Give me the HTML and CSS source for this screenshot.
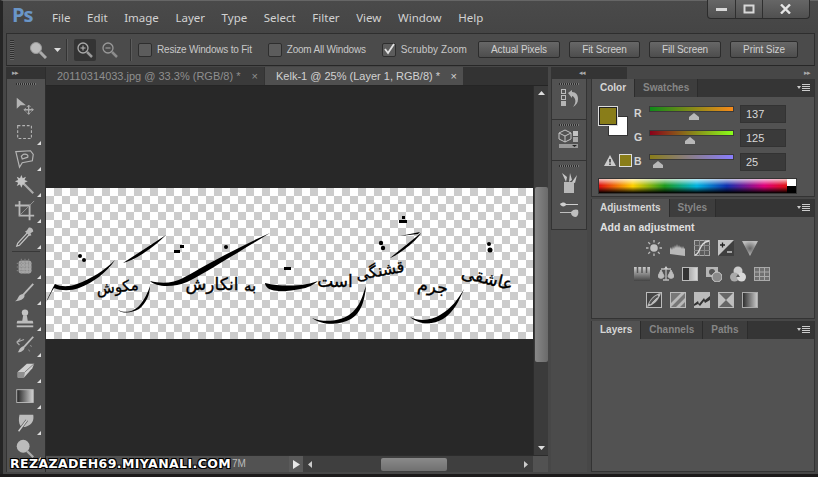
FILE: index.html
```html
<!DOCTYPE html>
<html lang="en">
<head>
<meta charset="utf-8">
<title>Photoshop</title>
<link rel="stylesheet" href="styles.css">
</head>
<body>
<div class="window">
  <header class="titlebar">
    <div class="logo">Ps</div>
    <nav class="menu"><span>File</span><span>Edit</span><span>Image</span><span>Layer</span><span>Type</span><span>Select</span><span>Filter</span><span>View</span><span>Window</span><span>Help</span></nav>
    <div class="winctl">
      <div class="wbtn w-min"><svg width="12" height="6"><rect y="2" width="11" height="3" fill="#d8d8d8"/></svg></div>
      <div class="wbtn w-max"><svg width="12" height="10"><rect x="1.5" y="1.5" width="9" height="7" fill="none" stroke="#d8d8d8" stroke-width="2"/></svg></div>
      <div class="wbtn w-close"><svg width="12" height="10"><path d="M1 0.5L10 9.5M10 0.5L1 9.5" stroke="#e4e4e4" stroke-width="2.4"/></svg></div>
    </div>
  </header>

  <section class="options">
    <div class="grip"></div>
    <svg class="opt-tool" width="18" height="18" viewBox="0 0 18 18"><circle cx="7" cy="7" r="5.5" fill="#bbb" stroke="#999"/><path d="M11 11l6 6" stroke="#aaa" stroke-width="3"/></svg>
    <svg class="opt-drop" width="7" height="4"><path d="M0 0h7l-3.500 4z" fill="#ddd"/></svg>
    <div class="sep sep-a"></div>
    <div class="zoombtn active"><svg width="18" height="18" viewBox="0 0 18 18"><circle cx="7" cy="7" r="5" fill="none" stroke="#aaa" stroke-width="1.300"/><path d="M4.500 7h5M7 4.500v5" stroke="#bbb"/><path d="M11 11l5 5" stroke="#999" stroke-width="2.500"/></svg></div>
    <div class="zoombtn"><svg width="18" height="18" viewBox="0 0 18 18"><circle cx="7" cy="7" r="5" fill="none" stroke="#999" stroke-width="1.300"/><path d="M4.500 7h5" stroke="#aaa"/><path d="M11 11l5 5" stroke="#8c8c8c" stroke-width="2.500"/></svg></div>
    <div class="sep sep-b"></div>
    <label class="check c1"><i class="box"></i>Resize Windows to Fit</label>
    <label class="check c2"><i class="box"></i>Zoom All Windows</label>
    <label class="check c3"><i class="box"><svg width="14" height="14"><path d="M3 6l3 4 6-9" fill="none" stroke="#e2e2e2" stroke-width="1.800"/></svg></i>Scrubby Zoom</label>
    <button class="btn b1">Actual Pixels</button>
    <button class="btn b2">Fit Screen</button>
    <button class="btn b3">Fill Screen</button>
    <button class="btn b4">Print Size</button>
  </section>

  <main class="workspace">
    <aside class="tools">
      <div class="collapse"><span>▸▸</span></div>
      <div class="dots"></div>
      <div class="tool t-first"><svg viewBox="0 0 24 24"><path d="M3 2l10 8H7l-4 4z" fill="#b4b4b4"/><path d="M16 10v10M11 15h10" stroke="#aaa" stroke-width="1.500"/><path d="M14 12l2-2 2 2M14 18l2 2 2-2M13 13l-2 2 2 2M19 13l2 2-2 2" fill="none" stroke="#aaa"/></svg></div>
      <div class="tool corner"><svg viewBox="0 0 24 24"><rect x="4" y="4" width="15" height="14" fill="none" stroke="#b4b4b4" stroke-width="1.200" stroke-dasharray="3 2"/></svg></div>
      <div class="tool corner"><svg viewBox="0 0 24 24"><path d="M2 4l16-1 3 4-1 7-11 2-3 5zM10 7c4-1 6 1 5 3l-6 2-1-3z" fill="none" stroke="#b4b4b4" stroke-width="1.300"/></svg></div>
      <div class="tool corner"><svg viewBox="0 0 24 24"><path d="M8 1l1.500 3.500L13 3l-1.500 3.500L15 8l-3.500 1.500L13 13l-3.500-1.500L8 15l-1.500-3.500L3 13l1.500-3.500L1 8l3.500-1.500L3 3l3.500 1.500z" fill="#c4c4c4"/><path d="M11 11l10 10" stroke="#aaa" stroke-width="2.400"/></svg></div>
      <div class="tool corner"><svg viewBox="0 0 24 24"><path d="M6 1v16h16M1 6h16v16" fill="none" stroke="#b8b8b8" stroke-width="2"/><path d="M6 17L22 1" stroke="#999"/></svg></div>
      <div class="tool corner"><svg viewBox="0 0 24 24"><path d="M15 7l-11 12-1 3 3-1 11-12z" fill="none" stroke="#c4c4c4" stroke-width="1.300"/><path d="M14 5l2-3c2-1 5 1 5 4l-3 2 1 2-2 1-5-5z" fill="#b8b8b8"/></svg></div>
      <div class="toolsep"></div>
      <div class="tool corner"><svg viewBox="0 0 24 24"><rect x="5" y="5" width="14" height="14" rx="3" fill="#a6a6a6"/><path d="M3 8h18M3 12h18M3 16h18M8 3v18M12 3v18M16 3v18" stroke="#8a8a8a" stroke-dasharray="1.500 1.500"/></svg></div>
      <div class="tool corner"><svg viewBox="0 0 24 24"><path d="M21 2L10 14" stroke="#bbb" stroke-width="2"/><path d="M10 13c2 1 2 3 0 5-2 2-6 3-9 3 2-1 3-3 4-5 1-2 3-3 5-3z" fill="#bdbdbd"/></svg></div>
      <div class="tool corner"><svg viewBox="0 0 24 24"><circle cx="12" cy="5" r="3.500" fill="#c4c4c4"/><path d="M10 8h4l1 6h5c1 0 1 3 1 3H3s0-3 1-3h5z" fill="#bcbcbc"/><rect x="3" y="19" width="18" height="2" fill="#bdbdbd"/></svg></div>
      <div class="tool corner"><svg viewBox="0 0 24 24"><path d="M21 3L11 14" stroke="#bbb" stroke-width="2"/><path d="M11 13c2 2-1 7-7 7 2-2 2-6 7-7z" fill="#bdbdbd"/><path d="M3 9l8-3M3 9l4-4M3 9l3 3" stroke="#aaa" stroke-width="1.300" fill="none"/><path d="M18 12l1 2M16 17l1 2" stroke="#999"/></svg></div>
      <div class="tool corner"><svg viewBox="0 0 24 24"><path d="M4 13L14 4h8l-2 5-9 10H4z" fill="#cfcfcf"/><path d="M4 13h8l-1 6H4z" fill="#8f8f8f"/><path d="M12 13L22 4" stroke="#777"/></svg></div>
      <div class="tool corner"><svg viewBox="0 0 24 24"><defs><linearGradient id="gr"><stop offset="0" stop-color="#222"/><stop offset="1" stop-color="#d5d5d5"/></linearGradient></defs><rect x="3" y="4" width="18" height="14" fill="url(#gr)" stroke="#bbb"/></svg></div>
      <div class="tool corner"><svg viewBox="0 0 24 24"><path d="M6 3h15c1 6-1 11-8 13-3 1-5 0-6-1-2-3-2-8-1-12z" fill="#bdbdbd"/><path d="M14 9L5 21" stroke="#555" stroke-width="3"/><path d="M14 9L5 21" stroke="#d0d0d0" stroke-width="1.400"/></svg></div>
      <div class="tool corner"><svg viewBox="0 0 24 24"><circle cx="10" cy="9" r="7" fill="#bbb"/><path d="M14 14l7 7" stroke="#aaa" stroke-width="2.500"/></svg></div>
    </aside>

    <section class="document">
      <div class="tabs">
        <div class="tab tab-off">20110314033.jpg @ 33.3% (RGB/8) *<b>×</b></div>
        <div class="tab tab-on">Kelk-1 @ 25% (Layer 1, RGB/8) *<b>×</b></div>
      </div>
      <div class="docbody">
        <div class="viewport">
          <svg class="canvas" width="487" height="151" viewBox="46 188 487 151">
            <g class="script" font-family="'DejaVu Sans',sans-serif" fill="#000" direction="rtl" text-anchor="middle">
              <text font-size="17" transform="translate(486 284) rotate(14)">عاشقی</text>
              <text font-size="17" transform="translate(432 292) rotate(8)">جرم</text>
              <text font-size="16" transform="translate(381 276) rotate(-10)">قشنگی</text>
              <text font-size="17" transform="translate(335 287)">است</text>
              <text font-size="15" transform="translate(250 291)">به</text>
              <text font-size="17" transform="translate(212 290)">انکارش</text>
              <text font-size="15" transform="translate(118 292) rotate(-6)">مکوش</text>
            </g>
            <g fill="#000">
              <path d="M410 317c10 5 22 3 30-2 12-7 18-16 24-26-5 12-10 23-21 30-10 6-24 6-33-2z"/>
              <path d="M312 318c12 5 28 3 37-3 12-8 14-22 17-29-1 10-3 26-15 33-12 7-30 6-39-1z"/>
              <path d="M265 283c12 3 24 3 36 2 6-1 12-2 17-4-5 4-10 7-18 8-8 2-22 3-28 1-4-1-7-4-7-7z"/>
              <path d="M390 258l31-25c-2 5-20 21-31 25zM400 236l20-4-2 2z"/>
              <path d="M118 310c8 4 16 1 21-4 6-7 9-14 11-20 0 9-4 17-11 23-7 4-16 5-21 1z"/>
              <path d="M150 281c12 3 24 2 33-3 12-6 40-24 87-45-40 24-68 42-83 49-12 5-30 6-37-1z"/>
              <path d="M123 263l43-28c-10 10-28 24-43 28z"/>
              <path d="M46 302c3-6 6-13 9-18 6 3 14 3 22 0 14-5 28-14 38-24-8 12-22 23-36 28-8 3-18 3-25 0-3 4-5 10-8 14z"/>
              <circle cx="80" cy="256" r="2"/><circle cx="84" cy="260" r="2"/><rect x="174" y="250" width="6" height="3"/><rect x="180" y="245" width="4" height="3"/>
              <rect x="284" y="267" width="7" height="3"/><rect x="399" y="220" width="8" height="3"/><rect x="402" y="216" width="3" height="3"/><circle cx="381" cy="243" r="2.200"/><circle cx="383" cy="248" r="2.200"/><circle cx="490" cy="250" r="2.500"/><circle cx="489" cy="244" r="2"/>
              <circle cx="226" cy="247" r="2"/>
            </g>
          </svg>
        </div>
        <div class="vscroll">
          <svg class="sb-up" width="7" height="4"><path d="M0 4h7L3.500 0z" fill="#ddd"/></svg>
          <div class="vthumb"></div>
          <svg class="sb-down" width="7" height="4"><path d="M0 0h7L3.500 4z" fill="#ddd"/></svg>
        </div>
      </div>
      <div class="statusrow">
        <div class="status">7M</div>
        <div class="st-arrow"><svg width="7" height="9"><path d="M0 0v9l7-4.500z" fill="#e8e8e8"/></svg></div>
        <div class="hscroll">
          <svg width="4" height="7"><path d="M4 0v7L0 3.500z" fill="#ccc"/></svg>
          <div class="hthumb"></div>
          <svg class="h-right" width="4" height="7"><path d="M0 0v7l4-3.500z" fill="#ccc"/></svg>
        </div>
        <div class="corner-box"></div>
      </div>
    </section>

    <aside class="dock">
      <div class="collapse dock-head"><span>◂◂</span></div>
      <div class="dockgroup g1"><div class="dots"></div><svg viewBox="0 0 20 20" width="20" height="20"><g fill="none" stroke="#bbb"><rect x="2.500" y="1.500" width="4" height="4"/><rect x="2.500" y="7.500" width="4" height="4"/></g><rect x="2" y="13" width="5" height="5" fill="#b5b5b5"/><path d="M9 5l4-3v2c4 0 6 3 6 7s-2 6-5 8c2-3 3-5 2-8-1-2-2-3-3-3v2z" fill="#b5b5b5"/></svg></div>
      <div class="dockgroup g2"><div class="dots"></div><svg viewBox="0 0 22 22" width="22" height="22"><path d="M7 1l6 3v6l-6 3-6-3V4zM1 4l6 3 6-3M7 7v6" fill="none" stroke="#c4c4c4"/><rect x="15" y="2" width="5" height="5" fill="#c4c4c4"/><rect x="15" y="8" width="5" height="5" fill="#aaa"/><rect x="1" y="15" width="19" height="4" fill="#999"/><path d="M14 16h5l-2.500 2z" fill="#222"/></svg></div>
      <div class="dockgroup g3"><div class="dots"></div>
        <svg viewBox="0 0 20 22" width="20" height="22"><path d="M5 10h10v11H5z" fill="#b8b8b8"/><path d="M7 10L3 1l5 4zM10 10l1-9 2 7zM13 10l5-7-2 8z" fill="#c8c8c8"/></svg>
        <svg class="g3b" viewBox="0 0 20 18" width="20" height="18"><path d="M1 3c2-2 5-2 6 0h12v1H7c-1 2-5 2-6-1z" fill="#cfcfcf"/><path d="M1 11h11c2-3 6-3 7-2 1 3 0 6-2 7-3 0-5-2-5-4H1z" fill="#bfbfbf"/></svg>
      </div>
    </aside>

    <aside class="panels">
      <div class="collapse panels-head"><span>▸▸</span></div>

      <section class="panel color">
        <div class="ptabs"><span class="on">Color</span><span>Swatches</span><i class="pmenu"></i></div>
        <div class="color-main">
          <div class="swatches"><div class="bgc"></div><div class="fgc"></div></div>
          <div class="warn">
            <svg width="12" height="11"><path d="M6 0l6 11H0z" fill="#ccc"/><path d="M6 4v3.500M6 8.500v1.500" stroke="#333" stroke-width="1.500"/></svg>
            <i class="gamut"></i>
          </div>
          <div class="sliders">
            <div class="srow"><span>R</span><div class="track"><div class="bar r"></div><i class="thumb" style="left:40px"></i></div><div class="val">137</div></div>
            <div class="srow"><span>G</span><div class="track"><div class="bar g"></div><i class="thumb" style="left:36px"></i></div><div class="val">125</div></div>
            <div class="srow"><span>B</span><div class="track"><div class="bar b"></div><i class="thumb" style="left:4px"></i></div><div class="val">25</div></div>
          </div>
        </div>
        <div class="spectrum"><div class="rainbow"></div><div class="bw"></div></div>
      </section>

      <section class="panel adjust">
        <div class="ptabs"><span class="on">Adjustments</span><span>Styles</span><i class="pmenu"></i></div>
        <h3>Add an adjustment</h3>
        <div class="arow">
          <svg viewBox="0 0 16 16"><circle cx="8" cy="8" r="3.800" fill="#c0c0c0"/><path d="M8 0v2.500M8 13.500V16M0 8h2.500M13.500 8H16M2.300 2.300l1.800 1.800M11.900 11.900l1.800 1.800M2.300 13.700l1.800-1.800M11.900 4.100l1.800-1.800" stroke="#bbb" stroke-width="1.300"/></svg>
          <svg viewBox="0 0 16 16"><path d="M0 14V9l1-2 1 3 1-4 1 3 1-4 1 3 1-4 1 4 1-3 1 3 1-2 1 3 1-3 1 3 1-1v8z" fill="#b8b8b8"/></svg>
          <svg viewBox="0 0 16 16"><rect x=".5" y=".5" width="15" height="15" fill="#5c5c5c" stroke="#aaa"/><path d="M5.500 0v16M10.500 0v16M0 5.500h16M0 10.500h16" stroke="#8a8a8a"/><path d="M1 15c5 0 4-13 14-14" fill="none" stroke="#ddd" stroke-width="1.300"/></svg>
          <svg viewBox="0 0 16 16"><rect width="16" height="16" fill="#c4c4c4"/><path d="M0 16L16 0v16z" fill="#3f3f3f"/><path d="M2 5h5M4.500 2.500v5" stroke="#222" stroke-width="1.300"/><path d="M9 12h5" stroke="#ddd" stroke-width="1.300"/></svg>
          <svg viewBox="0 0 16 16"><defs><radialGradient id="tri"><stop offset="0" stop-color="#666"/><stop offset="1" stop-color="#bbb"/></radialGradient></defs><path d="M0 1h16L8 16z" fill="url(#tri)"/></svg>
        </div>
        <div class="arow">
          <svg viewBox="0 0 16 16"><defs><linearGradient id="hs" x2="0" y2="1"><stop offset="0" stop-color="#ccc"/><stop offset="1" stop-color="#444"/></linearGradient></defs><rect y="1" width="16" height="14" fill="url(#hs)"/><path d="M3.500 1v6M8 1v6M12.500 1v6" stroke="#555" stroke-width="1.500"/></svg>
          <svg viewBox="0 0 16 16"><path d="M8 1v13M3 3h10M5 14h6" stroke="#bbb" stroke-width="1.300"/><path d="M8 0l2 3H6z" fill="#ccc"/><path d="M0 10l3-6 3 6c0 3-6 3-6 0zM10 10l3-6 3 6c0 3-6 3-6 0z" fill="#bbb" stroke="#bbb"/></svg>
          <svg viewBox="0 0 16 16"><defs><linearGradient id="bw"><stop offset="0" stop-color="#888"/><stop offset="1" stop-color="#ddd"/></linearGradient></defs><rect x=".5" y="1.500" width="15" height="13" fill="url(#bw)" stroke="#bbb"/><rect x="1" y="2" width="6" height="12" fill="#333"/></svg>
          <svg viewBox="0 0 16 16"><rect y="1" width="12" height="10" fill="#b5b5b5"/><circle cx="6" cy="6" r="3" fill="#555"/><circle cx="11" cy="11" r="5" fill="#8a8a8a" stroke="#ccc"/></svg>
          <svg viewBox="0 0 16 16"><circle cx="8" cy="5" r="4.500" fill="#ccc"/><circle cx="4.500" cy="11" r="4.500" fill="#aaa"/><circle cx="11.500" cy="11" r="4.500" fill="#d8d8d8"/><path d="M8 8l-2 3h4z" fill="#555"/></svg>
          <svg viewBox="0 0 16 16"><rect x=".5" y="1.500" width="15" height="13" fill="#707070" stroke="#aaa"/><path d="M5.500 1v14M10.500 1v14M0 6h16M0 10.500h16" stroke="#aaa"/></svg>
        </div>
        <div class="arow">
          <svg viewBox="0 0 16 16"><rect x=".5" y=".5" width="15" height="15" fill="#444" stroke="#bbb"/><path d="M1 15C3 8 8 2 15 1c-2 7-7 12-14 14z" fill="#bbb"/><path d="M4 12c1-3 5-7 8-8" stroke="#555" stroke-width="2"/></svg>
          <svg viewBox="0 0 16 16"><rect x=".5" y=".5" width="15" height="15" fill="#777" stroke="#bbb"/><path d="M1 11L11 1h4L1 15zM6 15L15 6v4l-5 5z" fill="#b8b8b8"/></svg>
          <svg viewBox="0 0 16 16"><rect x=".5" y=".5" width="15" height="15" fill="#bbb" stroke="#bbb"/><path d="M0 12l4-3 1 3 5-6 1 2 5-4v4l-5 3-1-2-4 5-2-2-4 2z" fill="#333"/></svg>
          <svg viewBox="0 0 16 16"><rect x=".5" y=".5" width="15" height="15" fill="#666" stroke="#bbb"/><path d="M1 1l7 7-7 7zM15 1L8 8l7 7z" fill="#bfbfbf"/></svg>
          <svg viewBox="0 0 16 16"><rect x=".5" y=".5" width="15" height="15" fill="url(#bw2)" stroke="#aaa"/><defs><linearGradient id="bw2"><stop offset="0" stop-color="#2a2a2a"/><stop offset="1" stop-color="#ccc"/></linearGradient></defs></svg>
        </div>
      </section>

      <section class="panel layers">
        <div class="ptabs"><span class="on">Layers</span><span>Channels</span><span>Paths</span><i class="pmenu"></i></div>
      </section>
    </aside>
  </main>
  <div class="watermark">REZAZADEH69.MIYANALI.COM</div>
</div>
</body>
</html>
```
FILE: styles.css
```css
* { box-sizing: border-box; }
html, body { margin: 0; padding: 0; }
body { width: 818px; height: 477px; overflow: hidden; font-family: "Liberation Sans", Arial, sans-serif; background: #1c1a1a; }
.window { position: relative; width: 818px; height: 474px; background: #474747; border-left: 3px solid #252525; border-top: 1px solid #666; display: flex; flex-direction: column; color: #ccc; }

.titlebar { display: flex; height: 32px; flex: none; align-items: flex-start; background: linear-gradient(#4a4a4a, #454545); }
.logo { width: 49px; padding: 2px 0 0 9px; font: 700 20px/24px "Open Sans", sans-serif; color: #6a96c8; letter-spacing: -1px; }
.menu { display: flex; gap: 16.600px; padding-top: 9px; font: 11.500px/15px "Noto Sans", sans-serif; color: #d2d2d2; }
.winctl { margin-left: auto; margin-right: 8px; display: flex; height: 19px; margin-top: -1px; background: linear-gradient(#666, #505050); border: 1px solid #2c2c2c; border-top: 0; border-radius: 0 0 4px 4px; }
.wbtn { display: flex; align-items: center; justify-content: center; height: 100%; border-right: 1px solid #2f2f2f; }
.w-min { width: 28px; }
.w-max { width: 27px; }
.w-close { width: 46px; border-right: 0; }

.options { position: relative; flex: none; height: 33px; margin: 0 3px 1px 3px; display: flex; align-items: center; background: #4b4b4b; border: 1px solid #2e2e2e; border-bottom: 1px solid #272727; font-size: 10px; letter-spacing: -.2px; }
.grip { width: 4px; height: 20px; margin-left: 3px; background: repeating-linear-gradient(#2e2e2e 0 1px, #666 1px 2px); }
.opt-tool { margin-left: 15px; }
.opt-drop { margin-left: 7px; }
.sep { width: 1px; height: 22px; background: #333; box-shadow: 1px 0 #5c5c5c; }
.sep-a { margin: 0 7px 0 5px; }
.sep-b { margin: 0 7px 0 6px; }
.zoombtn { width: 22px; height: 22px; display: flex; align-items: center; justify-content: center; margin-right: 3px; }
.zoombtn.active { background: #343434; border-radius: 2px; }
.check { display: flex; align-items: center; gap: 5px; color: #c8c8c8; white-space: nowrap; }
.box { width: 14px; height: 14px; background: #5c5c5c; border: 1px solid #2e2e2e; border-radius: 2px; display: block; flex: none; }
.box svg { display: block; margin: -1px; }
.c2 { margin-left: 16px; }
.c3 { margin-left: 16px; letter-spacing: .1px; }
.btn { height: 17px; padding: 0; margin: 0; background: linear-gradient(#676767, #4d4d4d); border: 1px solid #2c2c2c; border-radius: 2px; color: #d0d0d0; font: 10px/14px "Liberation Sans", sans-serif; letter-spacing: -.1px; }
.b1 { width: 82px; margin-left: 11px; }
.b2 { width: 71px; margin-left: 9px; }
.b3 { width: 72px; margin-left: 9px; }
.b4 { width: 68px; margin-left: 9px; }

.workspace { flex: 1; min-height: 0; display: flex; padding-bottom: 2px; }
.collapse { height: 12px; background: #333; color: #aaa; font-size: 7px; line-height: 11px; padding-left: 5px; letter-spacing: -1px; flex: none; }
.dots { height: 2px; margin: 4px auto 0; width: 20px; background: repeating-linear-gradient(90deg, #2c2c2c 0 1px, #777 1px 2px); }

.tools { width: 40px; margin-left: 3px; flex: none; background: #525252; border-right: 1px solid #2d2d2d; border-left: 1px solid #333; display: flex; flex-direction: column; align-items: stretch; overflow: hidden; }
.tool { position: relative; height: 26px; flex: none; display: flex; align-items: center; padding-left: 7px; }
.tool svg { width: 22px; height: 22px; }
.t-first { margin-top: 9px; }
.corner::after { content: ""; position: absolute; right: 4px; bottom: 1px; border: 2px solid transparent; border-right-color: #ddd; border-bottom-color: #ddd; }
.toolsep { height: 1px; background: #383838; margin: 1px 5px 2px; flex: none; }

.document { width: 502px; flex: none; display: flex; flex-direction: column; margin-right: 3px; }
.tabs { height: 19px; flex: none; display: flex; background: #333; font-size: 11px; line-height: 19px; border-bottom: 1px solid #252525; }
.tab { padding-left: 11px; white-space: nowrap; position: relative; }
.tab b { position: absolute; right: 6px; font-weight: 400; }
.tab-off { width: 218px; color: #8f8f8f; background: #3a3a3a; }
.tab-on { width: 198px; margin-left: 1px; color: #d2d2d2; background: #4f4f4f; }
.docbody { flex: 1; min-height: 0; display: flex; }
.viewport { flex: 1; background: #282828; }
.canvas { display: block; margin-top: 102px; background-color: #fff; background-image: conic-gradient(#ccc 25%, #fff 0 50%, #ccc 0 75%, #fff 0); background-size: 16px 16px; }
.script { stroke: #000; stroke-width: .35; }
.vscroll { width: 15px; flex: none; background: #3b3b3b; display: flex; flex-direction: column; align-items: center; border-left: 1px solid #2c2c2c; }
.sb-up { margin-top: 5px; }
.vthumb { width: 13px; height: 175px; margin-top: 92px; background: linear-gradient(90deg, #888, #6a6a6a); border-radius: 2px; }
.sb-down { margin-top: auto; margin-bottom: 5px; }
.statusrow { height: 17px; flex: none; display: flex; align-items: stretch; background: #525252; border-top: 1px solid #2c2c2c; }
.status { width: 243px; font-size: 10px; line-height: 16px; padding-left: 186px; color: #bbb; }
.st-arrow { width: 14px; background: #5a5a5a; display: flex; align-items: center; justify-content: center; }
.hscroll { flex: 1; display: flex; align-items: center; padding: 0 5px; background: #3f3f3f; }
.hthumb { width: 66px; height: 13px; margin-left: 69px; background: linear-gradient(#8a8a8a, #707070); border-radius: 2px; }
.h-right { margin-left: auto; }
.corner-box { width: 15px; background: #525252; }

.dock { width: 36px; flex: none; margin-right: 4px; display: flex; flex-direction: column; background: #4b4b4b; }
.dock-head { margin-right: -40px; background: #343434; text-align: left; padding-left: 0; }
.dockgroup { background: #525252; border: 1px solid #333; border-top: 0; display: flex; flex-direction: column; align-items: center; gap: 3px; }
.g1 { height: 41px; }
.g2 { height: 41px; }
.g3 { height: 69px; gap: 5px; }
.g3b { margin-top: 2px; }
.dock-head span { display: block; padding-left: 28px; }

.panels { width: 224px; flex: none; display: flex; flex-direction: column; gap: 2px; position: relative; }
.panels-head { background: transparent; text-align: right; padding-right: 5px; margin-bottom: -2px; }
.panel { background: #525252; border: 1px solid #333; border-top: 0; flex: none; }
.ptabs { height: 18px; display: flex; background: #353535; font: 700 10px/18px "Liberation Sans", sans-serif; color: #868686; position: relative; }
.ptabs span { padding: 0 8px; background: #3d3d3d; border-right: 1px solid #2c2c2c; }
.ptabs span.on { background: #525252; color: #d6d6d6; }
.pmenu { position: absolute; right: 4px; top: 5px; width: 8px; height: 7px; background: repeating-linear-gradient(#ccc 0 1px, transparent 1px 2px); }
.pmenu::before { content: ""; position: absolute; left: -5px; top: 2px; border: 2px solid transparent; border-top: 3px solid #ccc; }

.color { height: 118px; }
.color-main { position: relative; display: flex; height: 79px; }
.swatches { position: relative; width: 36px; margin: 9px 0 0 6px; height: 30px; }
.fgc { position: absolute; left: 0; top: 0; width: 20px; height: 20px; background: #897d19; border: 1px solid #ddd; box-shadow: inset 0 0 0 1px #222; }
.bgc { position: absolute; left: 10px; top: 10px; width: 20px; height: 20px; background: #fff; border: 1px solid #333; }
.warn { position: absolute; left: 12px; top: 57px; display: flex; align-items: center; gap: 3px; }
.gamut { display: block; width: 13px; height: 13px; background: #897d19; border: 1px solid #ddd; }
.sliders { display: flex; flex-direction: column; gap: 6px; margin: 8px 0 0 0; }
.srow { display: flex; height: 18px; font: 700 10.500px/17px "Liberation Sans", sans-serif; color: #d4d4d4; }
.srow span { width: 15px; }
.track { position: relative; width: 85px; margin-right: 6px; }
.bar { height: 6px; margin-top: 1px; border: 1px solid #3a3a3a; }
.r { background: linear-gradient(90deg, #0f8a19, #f88a19); }
.g { background: linear-gradient(90deg, #89001a, #89ff1a); }
.b { background: linear-gradient(90deg, #897d19, #897dff); }
.thumb { position: absolute; top: 8px; width: 0; height: 0; border: 5px solid transparent; border-top: 0; border-bottom: 4px solid #b8b8b8; }
.thumb::after { content: ""; position: absolute; left: -5px; top: 4px; width: 10px; height: 3px; background: #b8b8b8; }
.val { width: 46px; background: #3a3a3a; border: 1px solid #333; color: #d8d8d8; font: 400 11px/17px "Liberation Sans", sans-serif; padding-left: 5px; }
.spectrum { display: flex; height: 16px; margin: 2px 17px 0 6px; border: 1px solid #333; }
.rainbow { flex: 1; background: linear-gradient(180deg, rgba(255,255,255,.75), transparent 45%, rgba(0,0,0,.0) 55%, #000), linear-gradient(90deg, #e01010, #ffd000 18%, #1e9a1e 35%, #00b4e0 52%, #1030b0 68%, #e0007a 88%, #e01010); }
.bw { width: 9px; background: linear-gradient(#fff 50%, #000 50%); }

.adjust { height: 120px; }
.adjust h3 { margin: 0; padding: 4px 0 0 8px; font: 700 10.500px/13px "Liberation Sans", sans-serif; color: #e0e0e0; }
.arow { display: flex; justify-content: center; gap: 8px; margin-top: 10px; padding-right: 3px; }
.adjust h3 + .arow { margin-top: 6px; }
.arow svg { width: 16px; height: 16px; flex: none; }

.layers { flex: 1; }

.watermark { position: absolute; left: 7px; top: 455px; font: 700 12.500px/15px "DejaVu Sans", sans-serif; color: #fff; letter-spacing: .4px; text-shadow: 1px 1px 0 #000, -1px -1px 0 #000, 1px -1px 0 #000, -1px 1px 0 #000; white-space: nowrap; }
```
